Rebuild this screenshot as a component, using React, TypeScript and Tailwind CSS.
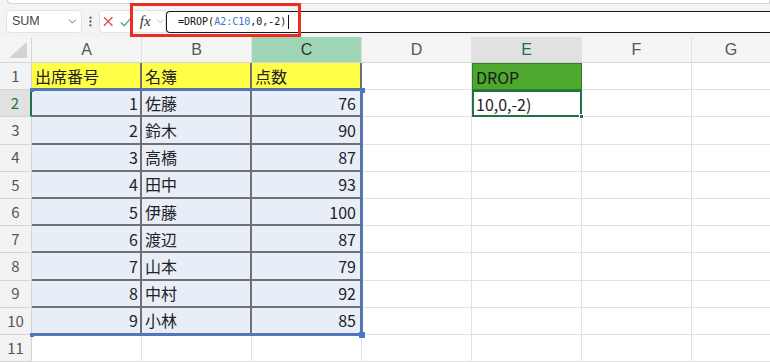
import React from 'react'
import { ChevronDown, EllipsisVertical } from 'lucide-react'

const rows: [number, string, number][] = [
  [1, '佐藤', 76],
  [2, '鈴木', 90],
  [3, '高橋', 87],
  [4, '田中', 93],
  [5, '伊藤', 100],
  [6, '渡辺', 87],
  [7, '山本', 79],
  [8, '中村', 92],
  [9, '小林', 85],
]

const font = { fontFamily: '"Noto Sans CJK JP", "Noto Sans", sans-serif' }

function RowHead({ n, active }: { n: number; active?: boolean }) {
  return (
    <div
      className={
        'w-[32px] shrink-0 flex items-center justify-center text-[15px] border-b ' +
        (active
          ? 'bg-[#e1e1e1] text-[#217346] border-r-2 border-r-[#217346] border-b-[#d4d4d4]'
          : 'bg-[#f3f3f3] text-[#555] border-r border-[#d4d4d4]')
      }
    >
      {n}
    </div>
  )
}

function Blank() {
  return <div className="w-[110px] shrink-0 border-r border-b border-[#e1e1e1] bg-white" />
}

function Tail() {
  return <div className="flex-1 border-b border-[#e1e1e1] bg-white" />
}

export default function App() {
  return (
    <div className="w-[770px] h-[362px] overflow-hidden bg-[#f3f3f3] text-[#222]" style={font}>
      {/* strip of the ribbon above */}
      <div className="h-[4px] ml-[7px] bg-white border border-t-0 border-[#d6d6d6] rounded-bl-[5px]" />

      {/* formula bar */}
      <div className="relative h-[33px] flex items-center pt-[2px]">
        <div className="ml-[6px] w-[76px] h-[23px] bg-white border border-[#e2e2e2] rounded-[4px] flex items-center justify-between pl-[5px] pr-[2px]">
          <span className="text-[12.5px] text-[#444]" style={{ fontFamily: '"Liberation Sans", sans-serif' }}>SUM</span>
          <ChevronDown size={13} strokeWidth={1.6} className="text-[#555]" />
        </div>
        <EllipsisVertical size={13} strokeWidth={2.2} className="ml-[2px] text-[#555]" />
        <div className="ml-[2px] w-[67px] h-[23px] bg-white border border-[#e2e2e2] rounded-l-[4px] flex items-center">
          <svg width="11" height="11" viewBox="0 0 11 11" className="ml-[3px]">
            <path d="M1 1 L10 10 M10 1 L1 10" stroke="#e0463f" strokeWidth="1.3" />
          </svg>
          <svg width="12" height="10" viewBox="0 0 12 10" className="ml-[7px]">
            <path d="M1 5.5 L4.5 9 L11 1.5" stroke="#44a664" strokeWidth="1.3" fill="none" />
          </svg>
          <span
            className="ml-[8px] text-[15px] italic text-[#333] leading-none"
            style={{ fontFamily: '"Liberation Serif", serif' }}
          >
            fx
          </span>
          <ChevronDown size={11} strokeWidth={1.4} className="ml-[4px] text-[#888]" />
        </div>
        <div className="flex-1 h-[22px] bg-white border-[1.5px] border-r-0 border-[#1a1a1a] rounded-l-[4px] flex items-center pl-[11px]">
          <span className="text-[10px] text-[#111]" style={{ fontFamily: '"DejaVu Sans Mono", monospace' }}>
            =DROP(<span className="text-[#3a78c9]">A2:C10</span>,0,-2)
          </span>
          <span className="ml-[2px] w-[1px] h-[14px] bg-[#111]" />
        </div>
        {/* red annotation */}
        <div className="absolute left-[130px] top-[-1px] w-[171px] h-[34px] border-[3px] border-[#ee2c1f] pointer-events-none" />
      </div>

      {/* sheet */}
      <div className="relative">
        {/* column headers */}
        <div className="flex h-[26px] bg-[#f5f5f5] border-b border-[#d4d4d4]">
          <div className="w-[32px] shrink-0 border-r border-[#d4d4d4] flex items-end justify-end pr-[4px] pb-[4px]">
            <svg width="18" height="16" viewBox="0 0 18 16">
              <path d="M18 0 L18 16 L0 16 Z" fill="#d2d2d2" />
            </svg>
          </div>
          {['A', 'B', 'C', 'D', 'E', 'F'].map((c) => (
            <div
              key={c}
              className={
                'w-[110px] shrink-0 flex items-center justify-center text-[16px] border-r border-[#e1e1e1] ' +
                (c === 'C'
                  ? 'bg-[#9fd5b7] text-[#333]'
                  : c === 'E'
                    ? 'bg-[#e1e1e1] text-[#217346]'
                    : 'text-[#555]')
              }
              style={{ fontFamily: '"Liberation Sans", sans-serif' }}
            >
              {c}
            </div>
          ))}
          <div className="flex-1 flex items-center justify-center text-[16px] text-[#555]" style={{ fontFamily: '"Liberation Sans", sans-serif' }}>
            G
          </div>
        </div>

        {/* row 1 */}
        <div className="flex h-[27.2px] text-[16px]">
          <RowHead n={1} />
          {['出席番号', '名簿', '点数'].map((t) => (
            <div key={t} className="w-[110px] shrink-0 bg-[#ffff47] border-r-2 border-b-2 border-[#707070] flex items-center pl-[3px]">
              {t}
            </div>
          ))}
          <Blank />
          <div className="w-[110px] shrink-0 bg-[#4ea72e] border border-[#2f7d25] flex items-center pl-[3px] text-[#1a1a1a]">
            DROP
          </div>
          <Blank />
          <Tail />
        </div>

        {/* rows 2-10 */}
        {rows.map(([no, name, score], i) => (
          <div key={no} className="flex h-[27.2px] text-[16px]">
            <RowHead n={i + 2} active={i === 0} />
            <div className="w-[110px] shrink-0 bg-[#e8eef8] border-r-2 border-b-2 border-[#707070] flex items-center justify-end pr-[2px]">
              {no}
            </div>
            <div className="w-[110px] shrink-0 bg-[#e8eef8] border-r-2 border-b-2 border-[#707070] flex items-center pl-[3px]">
              {name}
            </div>
            <div className="w-[110px] shrink-0 bg-[#e8eef8] border-r-2 border-b-2 border-[#707070] flex items-center justify-end pr-[4px]">
              {score}
            </div>
            <Blank />
            {i === 0 ? (
              <div className="relative w-[110px] shrink-0 bg-white border-2 border-[#217346] flex items-center pl-[2px]">
                10,0,-2)
                <span className="absolute right-[-4px] bottom-[-4px] w-[5px] h-[5px] bg-[#217346] border border-white" />
              </div>
            ) : (
              <Blank />
            )}
            <Blank />
            <Tail />
          </div>
        ))}

        {/* row 11 */}
        <div className="flex h-[27px] text-[16px]">
          <RowHead n={11} />
          <Blank />
          <Blank />
          <Blank />
          <Blank />
          <Blank />
          <Blank />
          <Tail />
        </div>

        {/* reference highlight A2:C10 */}
        <div className="absolute left-[32px] top-[52px] w-[331px] h-[247px] border-t-2 border-r-2 border-b-2 border-[#4a78d0] pointer-events-none">
          <span className="absolute left-[-2px] top-[-3px] w-[4px] h-[4px] bg-[#4a78d0]" />
          <span className="absolute right-[-4px] top-[-3px] w-[5px] h-[5px] bg-[#4a78d0]" />
          <span className="absolute left-[-2px] bottom-[-3px] w-[4px] h-[4px] bg-[#4a78d0]" />
          <span className="absolute right-[-4px] bottom-[-4px] w-[6px] h-[6px] bg-[#4a78d0]" />
        </div>
      </div>
    </div>
  )
}
